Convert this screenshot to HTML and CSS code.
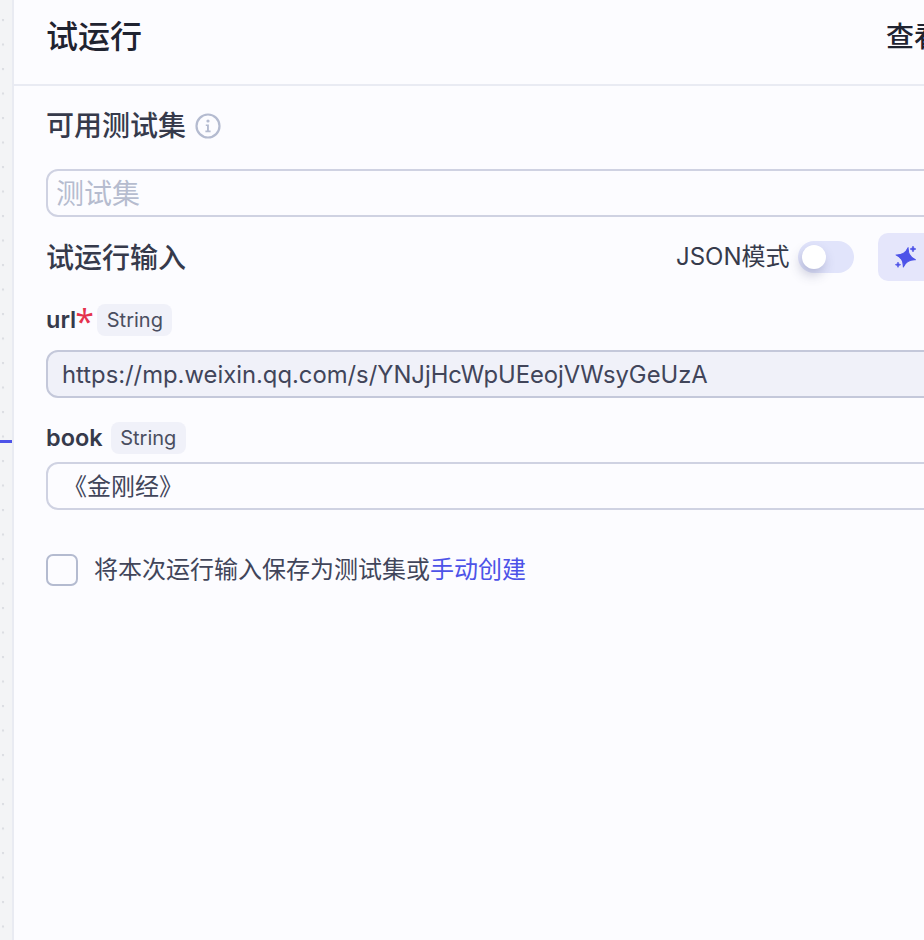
FILE: index.html
```html
<!DOCTYPE html>
<html lang="zh-CN">
<head>
<meta charset="utf-8">
<title>试运行</title>
<link rel="stylesheet" href="styles.css">
</head>
<body>
<div class="app">
  <div class="canvas"><div class="edge"></div></div>
  <main class="panel">
    <header class="head">
      <h1 class="title">试运行</h1>
      <span class="head-link">查看历史</span>
    </header>
    <section class="body">
      <div class="label-row set-row">
        <span class="section-title">可用测试集</span>
        <svg class="info" viewBox="0 0 26 26" width="26" height="26">
          <circle cx="13" cy="13" r="11.5" fill="none" stroke="#b4bbd0" stroke-width="2.2"/>
          <circle cx="13" cy="8" r="1.6" fill="#b4bbd0"/>
          <path d="M10.8 11.4h3.1v6.2h1.7v1.6h-5.2v-1.6h1.6v-4.6h-1.2z" fill="#b4bbd0"/>
        </svg>
      </div>
      <div class="field set-field placeholder"><span class="ph-text">测试集</span></div>
      <div class="input-head">
        <span class="section-title">试运行输入</span>
        <div class="json-tools">
          <span class="json-label">JSON模式</span>
          <span class="switch"><span class="knob"></span></span>
          <span class="ai-btn">
            <svg viewBox="0 0 24 24" width="24" height="24">
              <path d="M11.700 2.300Q13.300 10.700 21.700 12.300Q13.300 13.900 11.700 22.300Q10.100 13.900 1.700 12.300Q10.100 10.700 11.700 2.300z" fill="#4d53e8" stroke="#4d53e8" stroke-width="1" stroke-linejoin="round" transform="rotate(14 11.700 12.300)"/>
              <path d="M19 1l.9 2.100L22 4l-2.100.9L19 7l-.9-2.100L16 4l2.100-.9z" fill="#4d53e8" stroke="#4d53e8" stroke-width=".6" stroke-linejoin="round"/>
              <path d="M4 17l.8 1.900 1.900.8-1.900.8L4 22.400l-.8-1.900-1.900-.8 1.900-.8z" fill="#4d53e8" stroke="#4d53e8" stroke-width=".6" stroke-linejoin="round"/>
            </svg>
          </span>
        </div>
      </div>
      <div class="label-row url-label">
        <span class="param">url<span class="star">*</span></span>
        <span class="tag">String</span>
      </div>
      <div class="field value filled">https://mp.weixin.qq.com/s/YNJjHcWpUEeojVWsyGeUzA</div>
      <div class="label-row book-label">
        <span class="param">book</span>
        <span class="tag">String</span>
      </div>
      <div class="field value book-field">《金刚经》</div>
      <div class="save-row">
        <span class="check"></span>
        <span class="save-text">将本次运行输入保存为测试集或<a class="link">手动创建</a></span>
      </div>
    </section>
  </main>
</div>
</body>
</html>
```
FILE: styles.css
```css
* { box-sizing: border-box; }
html, body { margin: 0; height: 100%; overflow: hidden; }
body {
  font-family: Inter, "Noto Sans CJK SC", "Noto Sans", sans-serif;
  color: #1f2330;
  background: #fcfcff;
}
.app { display: flex; width: 924px; height: 940px; overflow: hidden; }
.canvas {
  flex: 0 0 14px;
  position: relative;
  border-right: 2px solid #e9ebf2;
  background-color: #f3f4f6;
  background-image: radial-gradient(circle at 3px 2px, #dcdee3 0, #dcdee3 1.1px, transparent 1.6px);
  background-size: 12px 24.5px;
  background-position: 0 18px;
}
.edge {
  position: absolute;
  left: 0;
  top: 440px;
  width: 12px;
  height: 3px;
  background: #4d53e8;
}
.panel { flex: 0 0 1100px; display: flex; flex-direction: column; background: #fcfcff; }
.head {
  height: 86px;
  flex: none;
  border-bottom: 2px solid #e9ebf3;
  padding: 0 32px 10px;
  display: flex;
  align-items: center;
}
.title { margin: 0; font-size: 32px; line-height: 44px; font-weight: 500; color: #1f2330; }
.head-link { font-size: 28px; line-height: 44px; font-weight: 500; color: #1f2330; margin-left: 744px; white-space: nowrap; }
.body { padding: 0 32px; display: flex; flex-direction: column; }
.label-row { display: flex; align-items: center; }
.set-row { margin-top: 20px; height: 40px; gap: 9px; }
.section-title { font-size: 28px; line-height: 40px; font-weight: 500; color: #363a4b; }
.info { flex: none; }
.field {
  height: 48px;
  border: 2px solid #cfd2e2;
  border-radius: 12px;
  display: flex;
  align-items: center;
  white-space: nowrap;
  width: 1000px;
}
.set-field { margin-top: 23px; padding-left: 8px; font-size: 28px; }
.ph-text { padding-bottom: 2px; }
.placeholder { color: #b6bccf; }
.input-head { margin-top: 20px; height: 42px; display: flex; align-items: center; }
.json-tools { display: flex; align-items: center; margin-left: 490px; margin-bottom: 2px; }
.json-label { font-size: 24px; line-height: 36px; color: #363a4b; white-space: nowrap; }
.switch {
  width: 56px;
  height: 32px;
  margin-left: 8px;
  border-radius: 16px;
  background: #e1e4fb;
  display: flex;
  align-items: center;
  padding-left: 4px;
  flex: none;
}
.knob { width: 24px; height: 24px; border-radius: 50%; background: #fff; box-shadow: -2px 6px 12px rgba(60, 65, 120, .28); }
.ai-btn {
  width: 80px;
  height: 48px;
  margin-left: 24px;
  border-radius: 10px;
  background: #e5e6fb;
  display: flex;
  align-items: center;
  padding-left: 16px;
  flex: none;
}
.url-label { margin-top: 25px; height: 32px; gap: 8px; }
.param { font-size: 23.500px; line-height: 32px; font-weight: 600; color: #363a4b; }
.star {
  display: inline-block;
  width: 14px;
  margin-left: -1px;
  color: #e5324d;
  font-family: "Open Sans", sans-serif;
  font-weight: 400;
  font-size: 34px;
  line-height: 0;
  vertical-align: -6px;
}
.tag {
  height: 32px;
  padding: 0 9.500px;
  border-radius: 8px;
  background: #f0f1f9;
  font-size: 20px;
  line-height: 32px;
  color: #4a4e60;
}
.value { margin-top: 14px; font-size: 23.800px; color: #41455a; padding-left: 14px; }
.filled { background: #f0f1f9; border-color: #c4c8da; }
.book-label { margin-top: 24px; height: 32px; gap: 8px; }
.book-field { margin-top: 8px; padding: 0 0 4px 15px; font-size: 24px; }
.save-row { margin-top: 44px; display: flex; align-items: center; height: 32px; }
.check { width: 32px; height: 32px; border: 2px solid #b4bbd0; border-radius: 7px; flex: none; }
.save-text { margin-left: 16px; font-size: 24px; line-height: 36px; color: #41455a; white-space: nowrap; }
.link { color: #4d53e8; }
```
